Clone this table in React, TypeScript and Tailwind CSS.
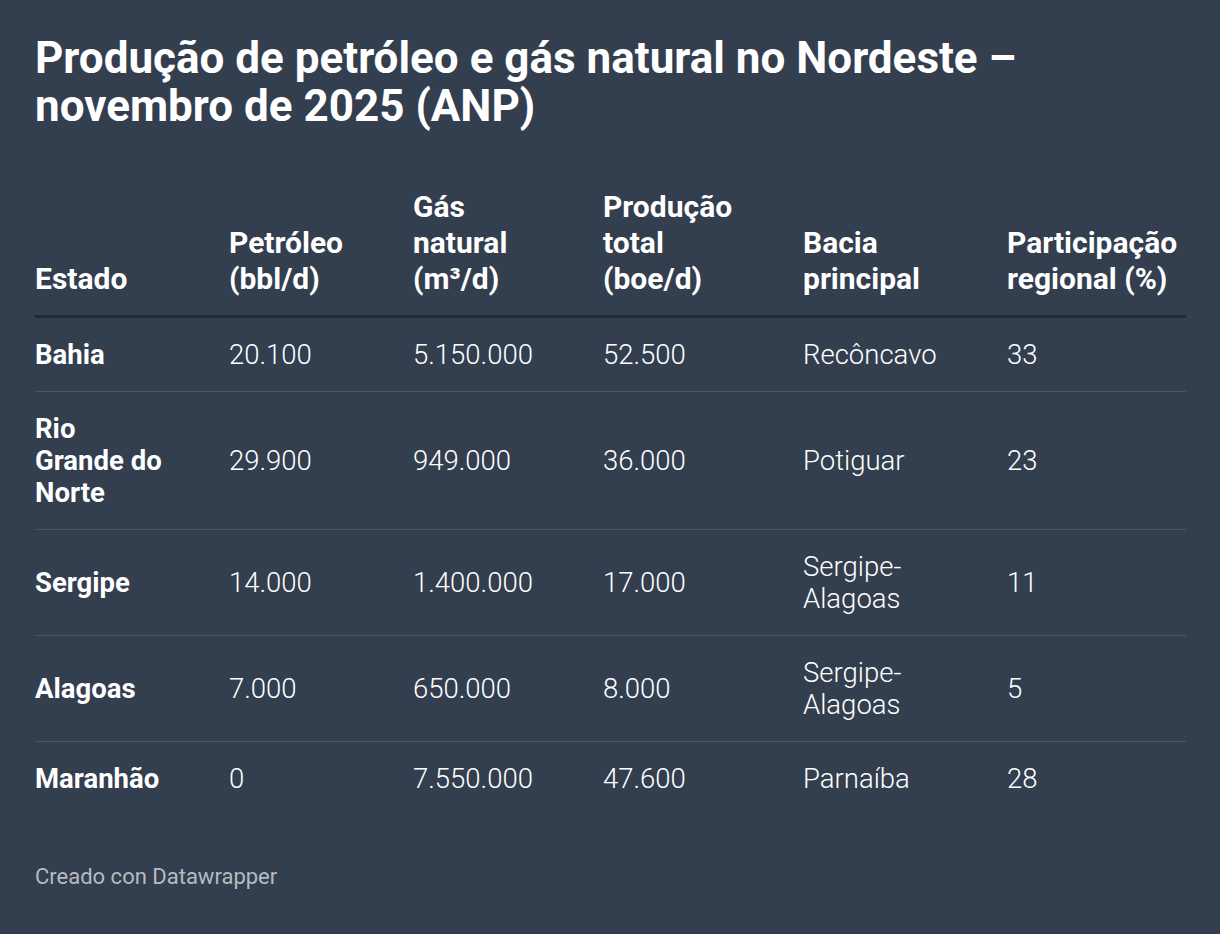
const columns = [
  "Estado",
  "Petróleo (bbl/d)",
  "Gás natural (m³/d)",
  "Produção total (boe/d)",
  "Bacia principal",
  "Participação regional (%)",
];

const headers = [
  ["Estado"],
  ["Petróleo", "(bbl/d)"],
  ["Gás", "natural", "(m³/d)"],
  ["Produção", "total", "(boe/d)"],
  ["Bacia", "principal"],
  ["Participação", "regional (%)"],
];

const rows = [
  { estado: ["Bahia"], petroleo: "20.100", gas: "5.150.000", total: "52.500", bacia: ["Recôncavo"], part: "33" },
  { estado: ["Rio", "Grande do", "Norte"], petroleo: "29.900", gas: "949.000", total: "36.000", bacia: ["Potiguar"], part: "23" },
  { estado: ["Sergipe"], petroleo: "14.000", gas: "1.400.000", total: "17.000", bacia: ["Sergipe-", "Alagoas"], part: "11" },
  { estado: ["Alagoas"], petroleo: "7.000", gas: "650.000", total: "8.000", bacia: ["Sergipe-", "Alagoas"], part: "5" },
  { estado: ["Maranhão"], petroleo: "0", gas: "7.550.000", total: "47.600", bacia: ["Parnaíba"], part: "28" },
];

const grid = "grid grid-cols-[194px_184px_190px_200px_204px_179px]";

function Lines({ lines }: { lines: string[] }) {
  return (
    <div>
      {lines.map((l, i) => (
        <div key={i} className="whitespace-nowrap">
          {l}
        </div>
      ))}
    </div>
  );
}

export default function App() {
  return (
    <div
      className="min-h-[934px] w-full bg-[#333e4f] pl-[35px] pt-[34px] text-white"
      style={{ fontFamily: "Roboto, 'Noto Sans', sans-serif" }}
    >
      <h1 className="text-[44px] font-bold leading-[48px]">
        Produção de petróleo e gás natural no Nordeste –<br />
        novembro de 2025 (ANP)
      </h1>

      <div className="mt-[59px] w-[1151px]" aria-label={columns.join(", ")}>
        <div className={`${grid} items-end border-b-[3px] border-[#25292f] pb-[18px] text-[30px] font-bold leading-[36px]`}>
          {headers.map((h, i) => (
            <Lines key={i} lines={h} />
          ))}
        </div>

        {rows.map((r, i) => (
          <div
            key={i}
            className={`${grid} items-center py-[20.5px] text-[27.5px] leading-[32px] ${
              i < rows.length - 1 ? "border-b border-[#4a5566]" : ""
            }`}
          >
            <div className="font-bold">
              <Lines lines={r.estado} />
            </div>
            <div className="font-light">{r.petroleo}</div>
            <div className="font-light">{r.gas}</div>
            <div className="font-light">{r.total}</div>
            <div className="font-light">
              <Lines lines={r.bacia} />
            </div>
            <div className="font-light">{r.part}</div>
          </div>
        ))}
      </div>

      <p className="mt-[50px] text-[22px] leading-[24px] text-[#b7bbc1]">Creado con Datawrapper</p>
    </div>
  );
}
